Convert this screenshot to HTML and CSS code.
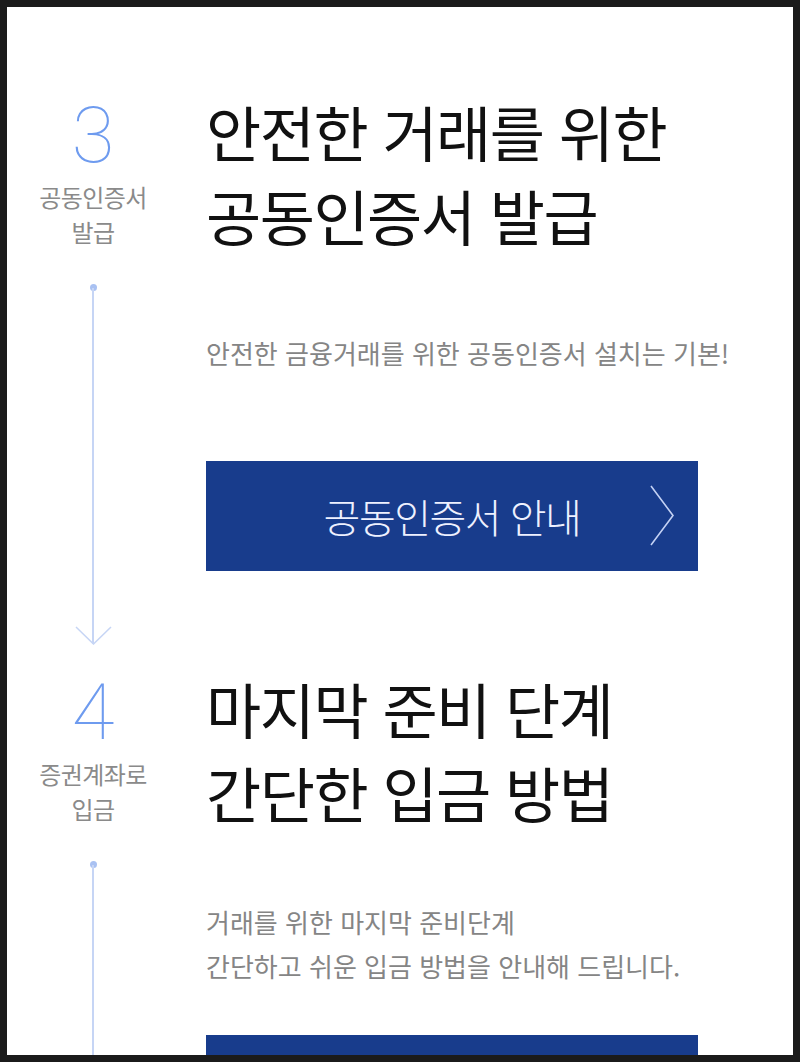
FILE: index.html
```html
<!DOCTYPE html>
<html lang="ko">
<head>
<meta charset="utf-8">
<title>공동인증서 발급</title>
<link rel="stylesheet" href="styles.css">
</head>
<body>
<div class="page">
  <section class="step step-3">
    <div class="side">
      <div class="num">3</div>
      <div class="label">공동인증서<br>발급</div>
      <div class="dot"></div>
      <div class="line"></div>
      <svg class="arrow" width="37" height="19" viewBox="0 0 37 19"><polyline points="1,1 18.5,18 36,1" fill="none" stroke="#c6d5f5" stroke-width="1.5"/></svg>
    </div>
    <div class="main">
      <h2 class="title">안전한 거래를 위한<br>공동인증서 발급</h2>
      <p class="desc">안전한 금융거래를 위한 공동인증서 설치는 기본!</p>
      <a class="btn" href="#"><span class="btn-text">공동인증서 안내</span><svg class="chev" width="24" height="62" viewBox="0 0 24 62"><polyline points="1,1 23,30.5 1,60" fill="none" stroke="#c3d1f4" stroke-width="1.6"/></svg></a>
    </div>
  </section>
  <section class="step step-4">
    <div class="side">
      <div class="num">4</div>
      <div class="label">증권계좌로<br>입금</div>
      <div class="dot"></div>
      <div class="line"></div>
    </div>
    <div class="main">
      <h2 class="title">마지막 준비 단계<br>간단한 입금 방법</h2>
      <p class="desc">거래를 위한 마지막 준비단계<br>간단하고 쉬운 입금 방법을 안내해 드립니다.</p>
      <a class="btn" href="#" aria-label="입금 방법 안내"><span class="btn-text"></span><svg class="chev" width="24" height="62" viewBox="0 0 24 62"><polyline points="1,1 23,30.5 1,60" fill="none" stroke="#c3d1f4" stroke-width="1.6"/></svg></a>
    </div>
  </section>
</div>
</body>
</html>
```
FILE: styles.css
```css
html, body {
  margin: 0;
  padding: 0;
}
body {
  background: #1b1b1b;
  padding: 7px 7px 7px 7px;
  font-family: "Noto Sans CJK KR", "Noto Sans", sans-serif;
}
.page {
  background: #ffffff;
  height: 1048px;
  overflow: hidden;
}
.step {
  display: grid;
  grid-template-columns: 172px 1fr;
  column-gap: 27px;
}
.step-3 {
  padding-top: 82px;
}
.step-4 {
  padding-top: 18px;
}
.side {
  display: flex;
  flex-direction: column;
  align-items: center;
  padding-top: 8px;
}
.step-3 .side {
  padding-bottom: 3px;
}
.num {
  font-family: Roboto, "Noto Sans", sans-serif;
  font-weight: 100;
  font-size: 78px;
  line-height: 78px;
  color: #6e9bef;
}
.label {
  margin-top: 4px;
  font-size: 24px;
  line-height: 35px;
  letter-spacing: -0.6px;
  color: #8a8a8a;
  text-align: center;
}
.dot {
  width: 7px;
  height: 7px;
  border-radius: 50%;
  background: #a9c1f2;
  margin-top: 35px;
}
.line {
  flex: 1;
  width: 1.5px;
  background: #c6d5f5;
  margin-top: -3px;
}
.arrow {
  display: block;
  margin-top: -18px;
}
.main {
  display: flex;
  flex-direction: column;
  align-items: flex-start;
}
.title {
  margin: 0;
  font-weight: 400;
  font-size: 60px;
  line-height: 84px;
  letter-spacing: -1.5px;
  color: #111111;
  white-space: nowrap;
}
.desc {
  margin: 0;
  font-size: 26px;
  line-height: 44px;
  letter-spacing: 0;
  color: #858585;
  white-space: nowrap;
}
.step-3 .desc {
  margin-top: 74px;
}
.step-4 .desc {
  margin-top: 66px;
}
.btn {
  display: grid;
  grid-template-columns: 1fr auto 1fr;
  align-items: center;
  width: 492px;
  height: 110px;
  background: #183c8c;
  color: #eef1ff;
  text-decoration: none;
  box-sizing: border-box;
}
.step-3 .btn {
  margin-top: 86px;
  margin-bottom: 77px;
}
.step-4 .btn {
  margin-top: 47px;
}
.btn-text {
  grid-column: 2;
  font-size: 40px;
  font-weight: 300;
  letter-spacing: -1.5px;
}
.chev {
  grid-column: 3;
  justify-self: end;
  margin-right: 24px;
  display: block;
}
```
